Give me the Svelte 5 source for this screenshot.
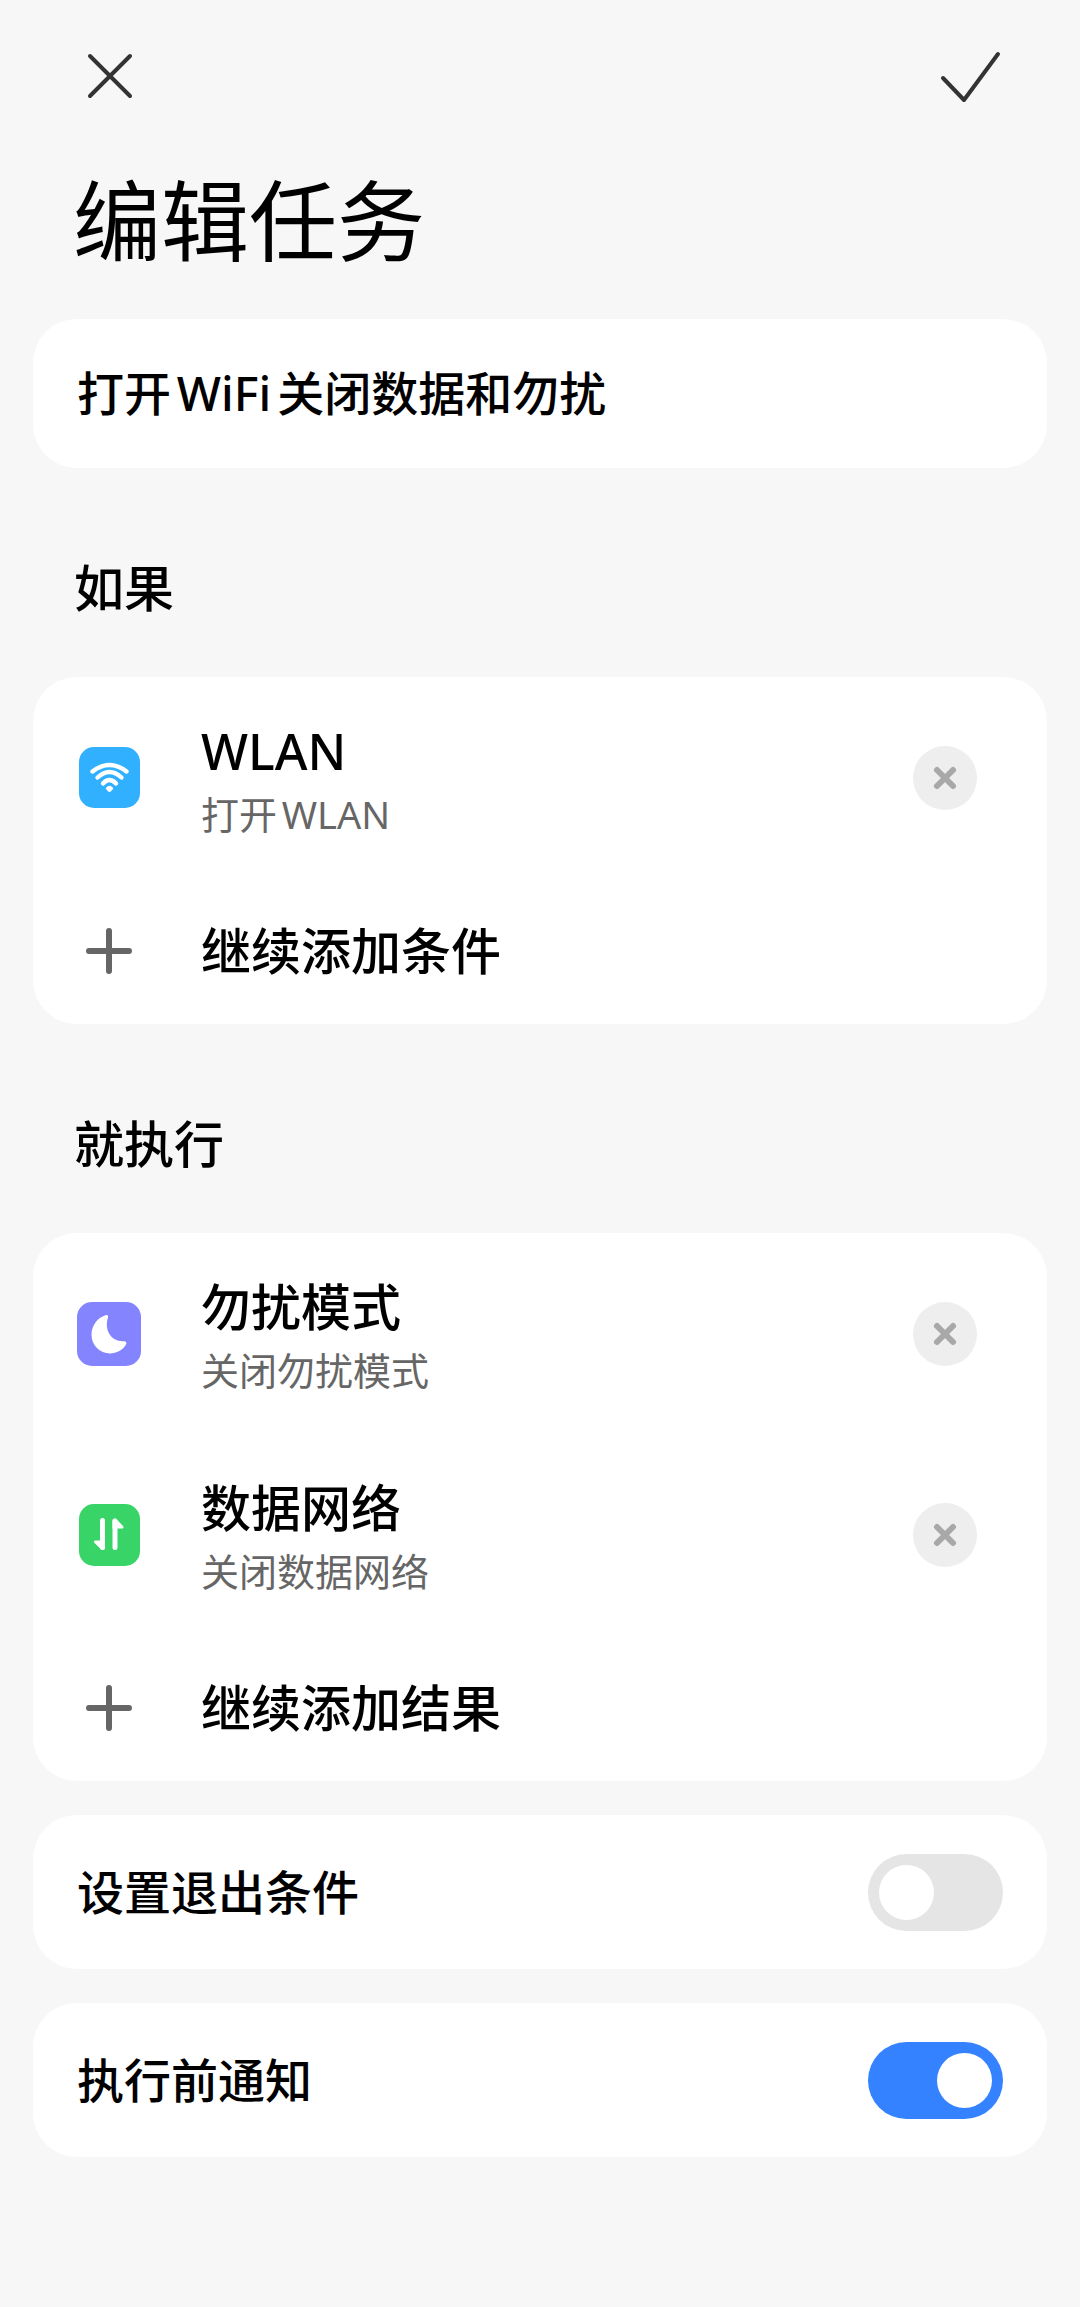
<script>
    let taskName = $state('打开WiFi关闭数据和勿扰');
    let exitCondition = $state(false);
    let notifyBefore = $state(true);

    let conditions = $state([
        {icon: 'wifi', title: 'WLAN', detail: '打开WLAN'}
    ]);

    let results = $state([
        {icon: 'moon', title: '勿扰模式', detail: '关闭勿扰模式'},
        {icon: 'data', title: '数据网络', detail: '关闭数据网络'}
    ]);
</script>

{#snippet itemIcon(name)}
    <span class="icon">
        {#if name === 'wifi'}
            <svg width="61" height="61" viewBox="0 0 61 61" aria-hidden="true">
                <rect width="61" height="61" rx="15" fill="#30b0ff"/>
                <g fill="none" stroke="#fff" stroke-width="4.4" stroke-linecap="round">
                    <path d="M13.500 24.500Q30.500 11.500 47.500 24.500"/>
                    <path d="M18.500 30.500Q30.500 19.500 42.500 30.500"/>
                    <path d="M24 36.500Q30.500 29.500 37 36.500"/>
                </g>
                <path d="M26.700 41Q30.500 36.500 34.300 41Q34.300 42 31.700 44.500Q30.500 45.500 29.300 44.500Q26.700 42 26.700 41Z" fill="#fff"/>
            </svg>
        {:else if name === 'moon'}
            <svg width="64" height="64" viewBox="0 0 64 64" aria-hidden="true">
                <rect width="64" height="64" rx="15" fill="#8484ff"/>
                <path d="M28.5 13.2C30.5 12.6 31.5 13.6 31 15.6C26.8 28.5 34.5 40 46.5 39.3C49.3 39.1 50 40.5 49 42.6C46 48.2 39.5 51.5 33 51.5C22.8 51.5 14.5 43.2 14.5 33C14.5 23.5 20.5 15.6 28.5 13.2Z" fill="#fff"/>
            </svg>
        {:else}
            <svg width="61" height="62" viewBox="0 0 61 62" aria-hidden="true">
                <rect width="61" height="62" rx="15" fill="#38d467"/>
                <g fill="none" stroke="#fff" stroke-width="5" stroke-linecap="round">
                    <path d="M23.500 16.500V43.500"/>
                    <path d="M36 17V43.500"/>
                </g>
                <path d="M26 43.500C26 46 23.500 46.500 22 45.300L15.500 39C14.500 38 15 36.500 16.500 36.500H26ZM33.500 17C33.500 14.500 36 14 37.500 15.200L44 22C45 23 44.500 24.500 43 24.500H33.500Z" fill="#fff"/>
            </svg>
        {/if}
    </span>
{/snippet}

{#snippet itemRow(item, list)}
    <li class="item">
        {@render itemIcon(item.icon)}
        <div class="text">
            <h3>{item.title}</h3>
            <p>{item.detail}</p>
        </div>
        <button class="remove" aria-label="删除{item.title}" onclick={() => list.splice(list.indexOf(item), 1)}>
            <svg width="64" height="64" viewBox="0 0 64 64" aria-hidden="true">
                <path d="M24 24L40 40M40 24L24 40" stroke="#a8a8a8" stroke-width="6" stroke-linecap="round"/>
            </svg>
        </button>
    </li>
{/snippet}

{#snippet addRow(label)}
    <li>
        <button class="add">
            <span class="icon">
                <svg width="46" height="46" viewBox="0 0 46 46" aria-hidden="true">
                    <path d="M23 3V43M3 23H43" stroke="#666" stroke-width="6" stroke-linecap="round"/>
                </svg>
            </span>
            <span class="caption">{label}</span>
        </button>
    </li>
{/snippet}

<main>
    <header>
        <button class="action" aria-label="取消">
            <svg width="64" height="64" viewBox="0 0 64 64" aria-hidden="true">
                <path d="M13 12L53 52M53 12L13 52" stroke="#333" stroke-width="4" stroke-linecap="round"/>
            </svg>
        </button>
        <button class="action" aria-label="保存">
            <svg width="64" height="64" viewBox="0 0 64 64" fill="none" aria-hidden="true">
                <path d="M4 34L25 56L59 10" stroke="#333" stroke-width="4" stroke-linecap="round" stroke-linejoin="round"/>
            </svg>
        </button>
    </header>

    <h1>编辑任务</h1>

    <div class="card name">
        <input type="text" aria-label="任务名称" bind:value={taskName}>
    </div>

    <h2>如果</h2>
    <ul class="card">
        {#each conditions as item}
            {@render itemRow(item, conditions)}
        {/each}
        {@render addRow('继续添加条件')}
    </ul>

    <h2>就执行</h2>
    <ul class="card">
        {#each results as item}
            {@render itemRow(item, results)}
        {/each}
        {@render addRow('继续添加结果')}
    </ul>

    <label class="card setting">
        <span class="caption">设置退出条件</span>
        <input type="checkbox" role="switch" bind:checked={exitCondition}>
    </label>

    <label class="card setting">
        <span class="caption">执行前通知</span>
        <input type="checkbox" role="switch" bind:checked={notifyBefore}>
    </label>
</main>

<style>
    :global(body) {
        margin: 0;
        background-color: #f7f7f7;
    }

    main {
        padding: 0 33px 150px;
        color: #000;
        font-family: 'Noto Sans', 'Noto Sans CJK SC', sans-serif;
        font-weight: 500;
        text-autospace: normal;
    }

    header {
        display: flex;
        justify-content: space-between;
        padding: 44px 44px 0;
    }

    h1, h2, h3, p, ul {
        margin: 0;
        padding: 0;
    }

    h1 {
        padding: 46px 40px 33px;
        font-size: 88px;
        font-weight: 400;
        line-height: 132px;
    }

    h2 {
        padding: 85px 41px 54px;
        font-size: 50px;
        font-weight: 500;
        line-height: 70px;
    }

    ul {
        list-style: none;
    }

    button {
        padding: 0;
        border: none;
        background: none;
        color: inherit;
        font-family: inherit;
        font-weight: inherit;
        cursor: pointer;
    }

    .action, .remove {
        width: 64px;
        height: 64px;
        flex-shrink: 0;
    }

    svg {
        display: block;
    }

    .card {
        border-radius: 44px;
        background-color: #fff;
    }

    .name input {
        display: block;
        box-sizing: border-box;
        width: 100%;
        height: 149px;
        padding: 0 44px 6px;
        border: none;
        outline: none;
        background: none;
        color: inherit;
        font-family: inherit;
        font-size: 47px;
        font-weight: inherit;
        text-autospace: inherit;
    }

    .item {
        display: flex;
        align-items: center;
        gap: 60px;
        box-sizing: border-box;
        min-height: 201px;
        padding: 0 70px 0 44px;
    }

    .icon {
        display: flex;
        justify-content: center;
        width: 64px;
        flex-shrink: 0;
    }

    .text {
        flex: 1;
        padding-top: 6px;
    }

    h3 {
        font-size: 50px;
        font-weight: 500;
        line-height: 66px;
    }

    p {
        color: #666;
        font-size: 38px;
        font-weight: 400;
        line-height: 60px;
    }

    .remove {
        border-radius: 50%;
        background-color: #eee;
    }

    .add {
        display: flex;
        align-items: center;
        gap: 60px;
        width: 100%;
        min-height: 146px;
        padding: 0 44px;
        font-size: 50px;
        text-align: left;
    }

    .caption {
        padding-bottom: 6px;
    }

    .setting {
        display: flex;
        align-items: center;
        justify-content: space-between;
        min-height: 154px;
        margin-top: 34px;
        padding: 0 44px;
        font-size: 47px;
    }

    .setting input {
        appearance: none;
        display: flex;
        box-sizing: border-box;
        width: 135px;
        height: 77px;
        margin: 0;
        padding: 11px;
        border-radius: 39px;
        background-color: #e5e5e5;
        cursor: pointer;
    }

    .setting input::before {
        content: '';
        width: 55px;
        height: 55px;
        border-radius: 50%;
        background-color: #fff;
    }

    .setting input:checked {
        justify-content: flex-end;
        background-color: #3482ff;
    }
</style>
